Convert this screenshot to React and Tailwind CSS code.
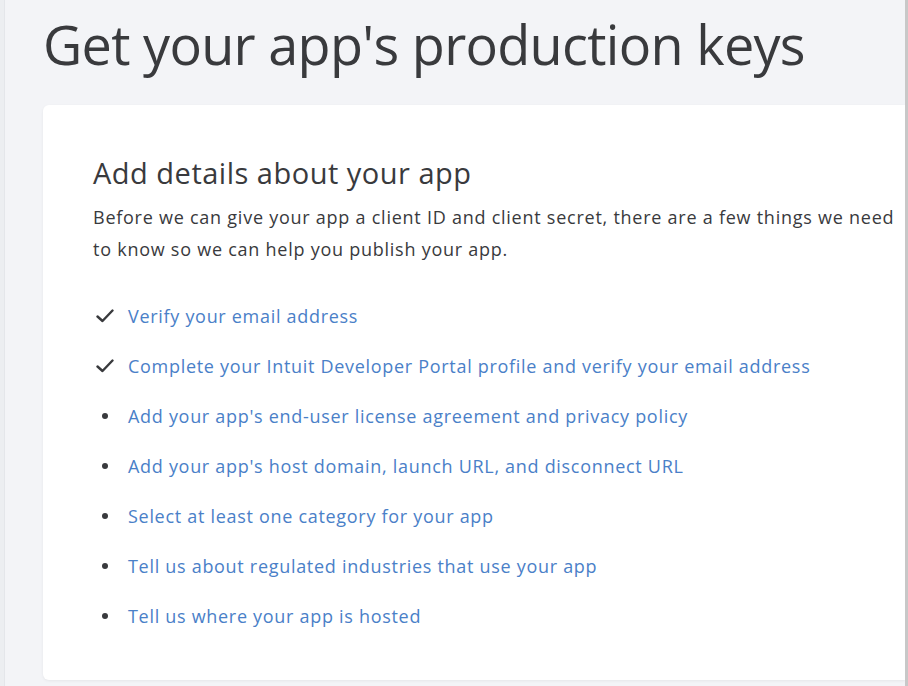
import React from "react";

const items = [
  { done: true, text: "Verify your email address" },
  { done: true, text: "Complete your Intuit Developer Portal profile and verify your email address" },
  { done: false, text: "Add your app's end-user license agreement and privacy policy" },
  { done: false, text: "Add your app's host domain, launch URL, and disconnect URL" },
  { done: false, text: "Select at least one category for your app" },
  { done: false, text: "Tell us about regulated industries that use your app" },
  { done: false, text: "Tell us where your app is hosted" },
];

function Check() {
  return (
    <svg width="18" height="14" viewBox="0 0 18 14" fill="none">
      <path d="M1.5 7.5 L6.5 12 L16.5 1.5" stroke="#393a3d" strokeWidth="2.4" strokeLinecap="round" strokeLinejoin="round" />
    </svg>
  );
}

export default function App() {
  return (
    <div
      className="w-[908px] h-[686px] overflow-hidden bg-[#f3f4f7] flex"
      style={{ fontFamily: "'Open Sans', 'Liberation Sans', sans-serif" }}
    >
      <div className="w-[5px] bg-[#eceef1] border-r border-[#e4e6ea]" />
      <div className="flex-1 flex flex-col pl-[38px]">
        <h1 className="text-[54px] leading-[60px] text-[#393a3d] font-medium mt-[14px] tracking-[-0.7px] whitespace-nowrap">
          Get your app's production keys
        </h1>
        <div className="mt-[31px] bg-white rounded-l-[6px] shadow-[0_1px_3px_rgba(0,0,0,0.06)] flex-1 mb-[6px] pl-[50px] pt-[50px]">
          <h2 className="text-[29px] leading-[36px] tracking-[0.5px] text-[#393a3d]">Add details about your app</h2>
          <p className="mt-[10px] text-[18px] leading-[32px] tracking-[0.75px] text-[#393a3d] pr-[6px]">
            Before we can give your app a client ID and client secret, there are a few things we need to know so we can help you publish your app.
          </p>
          <ul className="mt-[36px] flex flex-col gap-[20px]">
            {items.map((it, i) => (
              <li key={i} className="flex items-center h-[30px]">
                <span className="w-[35px] flex items-center">
                  {it.done ? (
                    <span className="ml-[3px] flex"><Check /></span>
                  ) : (
                    <span className="ml-[9px] w-[6px] h-[6px] rounded-full bg-[#393a3d]" />
                  )}
                </span>
                <span className="text-[18px] tracking-[0.7px] text-[#4a80c8] whitespace-nowrap">{it.text}</span>
              </li>
            ))}
          </ul>
        </div>
      </div>
      <div className="w-[3px] bg-[#c8c8c8]" />
    </div>
  );
}
